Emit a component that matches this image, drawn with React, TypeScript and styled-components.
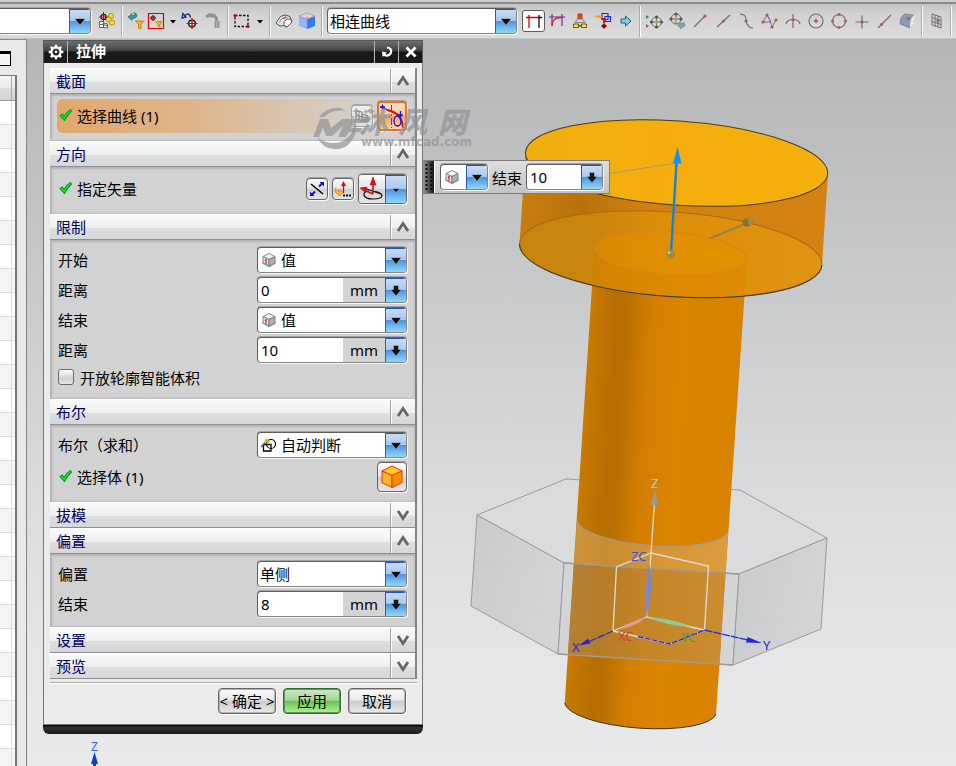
import React, { useState } from "react";
import styled, { createGlobalStyle, css } from "styled-components";

const sans = `"Noto Sans", "Noto Sans CJK SC", sans-serif`;

const GlobalStyle = createGlobalStyle`
  * { box-sizing: border-box; }
  body { margin: 0; overflow: hidden; font-family: ${sans}; font-size: 15px; color: #000; }
  button, input, select { font: inherit; color: inherit; }
`;

/* ---------- page ---------- */

const Page = styled.div`
  height: 100vh;
  display: flex;
  flex-direction: column;
`;

const Workspace = styled.div`
  flex: 1;
  min-height: 0;
  display: flex;
`;

const ToolbarEdge = styled.div`
  height: 4px;
  flex: none;
  background: #cdcdcd;
  border-bottom: 2px solid #8b8b8b;
`;

const Toolbar = styled.div`
  flex: none;
  height: 35px;
  display: flex;
  align-items: center;
  overflow: hidden;
  background: linear-gradient(#c4c4c4, #d2d2d2 30%, #dcdcdc);
  border-bottom: 1px solid #bfc3c3;
`;

const Separator = styled.span`
  flex: none;
  width: 2px;
  height: 31px;
  margin: 0 2px;
  background: linear-gradient(90deg, #adadad 50%, #fafafa 50%);
`;

const ToolButton = styled.button<{ $w?: number; $on?: boolean }>`
  flex: none;
  width: ${(p) => p.$w ?? 23}px;
  height: 22px;
  padding: 0;
  display: grid;
  place-items: center;
  border: ${(p) => (p.$on ? "1px solid #5c5c5c" : "0")};
  border-radius: 3px;
  background: ${(p) => (p.$on ? "#fff" : "transparent")};
`;

const Spacer = styled.span<{ $w: number }>`
  flex: none;
  width: ${(p) => p.$w}px;
`;

/* ---------- fields ---------- */

const Field = styled.div<{ $w?: number; $cut?: boolean }>`
  flex: none;
  width: ${(p) => p.$w ?? 150}px;
  height: 26px;
  display: flex;
  align-items: stretch;
  overflow: hidden;
  background: #fff;
  border: 1px solid #858585;
  border-top-color: #5f5f5f;
  border-left-color: #5f5f5f;
  border-radius: 4px;
  box-shadow: 1px 1px 0 #f8f8f8, 0 -1px 0 #a4a4a4;
  ${(p) => p.$cut && css`border-left: 0; border-radius: 0 4px 4px 0;`}
`;

const FieldIcon = styled.span`
  flex: none;
  width: 21px;
  display: grid;
  place-items: center;
`;

const SelectBox = styled.select`
  flex: 1;
  min-width: 0;
  appearance: none;
  padding: 0 2px;
  border: 0;
  outline: 0;
  background: transparent;
`;

const TextBox = styled.input`
  flex: 1;
  min-width: 0;
  padding: 0 3px;
  border: 0;
  outline: 0;
  background: transparent;
`;

const Unit = styled.span`
  flex: none;
  width: 42px;
  display: grid;
  place-items: center;
  background: #d3d3d3;
`;

const blueFace = css`
  flex: none;
  width: 21px;
  padding: 0;
  display: grid;
  place-items: center;
  border: 0;
  border-left: 1px solid #2a5cc0;
  border-top: 1px solid #1f55c4;
  background: linear-gradient(#c9dbf6, #a9c8f2 46%, #4a94e2 50%, #6fb7ef 75%, #8fd6fb);
`;
const BlueArrow = styled.span`${blueFace}`;
const BlueButton = styled.button`${blueFace}`;

/* ---------- side pane ---------- */

const SidePane = styled.aside`
  flex: none;
  width: 27px;
  display: flex;
  flex-direction: column;
  overflow: hidden;
  background: #e9e9e9;
  border-right: 1px solid #838383;
  border-top: 1px solid #8d8d8d;
`;

const PinFrame = styled.div`
  width: 11px;
  height: 15px;
  margin: 11px 0 9px;
  border: 1px solid #000;
  border-top-width: 3px;
  border-left: 0;
  background: #f4f4f4;
`;

const TreeGrid = styled.div`
  flex: 1;
  width: 17px;
  border-right: 2px solid #777;
  border-top: 1px solid #777;
  overflow: hidden;
`;

const TreeHead = styled.div`
  height: 25px;
  border-bottom: 1px solid #9a9a9a;
  background: linear-gradient(90deg, transparent 11px, #aaa 11px, #aaa 12px, transparent 12px),
    linear-gradient(#f4f4f4, #ececec 50%, #dadcdd 50%, #d4d6d8);
`;

const TreeRow = styled.div`
  height: 24px;
  border-bottom: 1px solid #dcdcdc;
  background: linear-gradient(90deg, transparent 11px, #dedede 11px, #dedede 12px, transparent 12px), #fff;
  &:nth-child(odd) {
    background: linear-gradient(90deg, transparent 11px, #dedede 11px, #dedede 12px, transparent 12px), #f5f5f5;
  }
`;

/* ---------- viewport ---------- */

const Viewport = styled.main`
  position: relative;
  flex: 1;
  min-width: 0;
  overflow: hidden;
  background: linear-gradient(#b3b5b7, #cbccce 38%, #dddedf 68%, #e6e7e9 90%, #e8e9ea);
`;

const SceneSvg = styled.svg`
  display: block;
  width: 100%;
  height: 100%;
`;

const Watermark = styled.svg`
  position: absolute;
  left: 283px;
  top: 53px;
  pointer-events: none;
`;

/* ---------- dialog ---------- */

const Dialog = styled.section`
  position: absolute;
  left: 16px;
  top: 1px;
  width: 380px;
`;

const TitleBar = styled.header`
  height: 23px;
  display: flex;
  align-items: stretch;
  color: #fff;
  border: 1px solid #55585a;
  border-bottom: 0;
  background: linear-gradient(#6b6e70, #505254 30%, #3a3b3c 46%, #171717 50%, #1c1c1c);
`;

const TitleText = styled.h1`
  flex: 1;
  margin: 0;
  padding-left: 8px;
  font-size: 15px;
  font-weight: 700;
  line-height: 21px;
`;

const TitleButton = styled.button<{ $side: "left" | "right" }>`
  width: 24px;
  padding: 0;
  display: grid;
  place-items: center;
  border: 0;
  border-${(p) => (p.$side === "left" ? "right" : "left")}: 1px solid #b5b5b5;
  background: transparent;
`;

const DialogBody = styled.div`
  padding: 5px 5px 10px 6px;
  background: #ebebeb;
  border: 1px solid #777;
  border-top: 0;
`;

const DialogFoot = styled.div`
  height: 9px;
  background: linear-gradient(#000, #333 30%, #1a1a1a);
  border-radius: 0 0 6px 6px;
`;

const Sections = styled.div`
  border-right: 2px solid #858585;
`;

const SectionHead = styled.h2`
  margin: 0;
  font-size: 15px;
  font-weight: 400;
`;

const SectionToggle = styled.button`
  width: 100%;
  height: 26px;
  padding: 0;
  display: flex;
  align-items: stretch;
  border: 0;
  border-top: 1px solid #fff;
  border-bottom: 1px solid #8c8e8f;
  color: #00005c;
  text-align: left;
  line-height: 24px;
  background: linear-gradient(#fafafa, #eef0f0 52%, #dcdedf 54%, #d5d7d9);
`;

const SectionName = styled.span`
  flex: 1;
  padding-left: 6px;
`;

const ChevronCell = styled.span`
  width: 25px;
  display: grid;
  place-items: center;
  border-left: 1px solid #a2a2a2;
  box-shadow: inset 1px 0 0 #fff;
`;

const SectionBody = styled.div`
  padding: 5px 8px 8px 7px;
  background: #d2d2d2;
  box-shadow: inset 2px 2px 2px #b4b4b4, inset -1px -1px 2px #bbb;
`;

const Row = styled.div<{ $h?: number; $hot?: boolean }>`
  height: ${(p) => p.$h ?? 30}px;
  display: flex;
  align-items: center;
  gap: 4px;
  ${(p) =>
    p.$hot &&
    css`
      border-radius: 6px;
      background: linear-gradient(90deg, #e2a76c, #deb68c 40%, #d9c4ae 65%, #d2d2d2 92%);
    `}
`;

const RowLabel = styled.label`
  flex: 1;
  display: flex;
  align-items: center;
  gap: 4px;
  padding: 0 0 2px 1px;
`;

const SquareButton = styled.button<{ $size: number; $hot?: boolean }>`
  flex: none;
  width: ${(p) => p.$size}px;
  height: ${(p) => p.$size}px;
  padding: 0;
  display: grid;
  place-items: center;
  border: ${(p) => (p.$hot ? "2px solid #e8701e" : "1px solid #666")};
  border-radius: 4px;
  box-shadow: 1px 1px 0 #f6f6f6, 0 -1px 0 #a0a0a0;
  background: ${(p) =>
    p.$hot
      ? "linear-gradient(#fde0c4, #fbc79a 50%, #f8a060 52%, #fdd8ae)"
      : "linear-gradient(#fafafa, #e4e4e4 48%, #cfcfcf 52%, #e6e6e6)"};
  &:disabled { border-color: #999; opacity: 0.8; }
`;

const SplitButton = styled.div`
  flex: none;
  width: 49px;
  height: 30px;
  display: flex;
  overflow: hidden;
  border: 1px solid #666;
  border-radius: 4px;
  box-shadow: 1px 1px 0 #f6f6f6, 0 -1px 0 #a0a0a0;
`;

const SplitMain = styled.button`
  flex: 1;
  padding: 0;
  border: 0;
  display: grid;
  place-items: center;
  background: linear-gradient(#fafafa, #e4e4e4 48%, #cfcfcf 52%, #e6e6e6);
`;

const CheckBox = styled.input`
  appearance: none;
  flex: none;
  width: 16px;
  height: 16px;
  margin: 0 2px 0 0;
  border: 1px solid #6b6b6b;
  border-radius: 3px;
  background: linear-gradient(#fff, #d0d0d0 60%, #e6e6e6);
  &:checked { background: #25c02b; }
`;

const Footer = styled.footer`
  margin-top: 3px;
  padding: 5px 11px 0 0;
  display: flex;
  justify-content: flex-end;
  gap: 7px;
  border-top: 1px solid #ababab;
  box-shadow: inset 0 1px 0 #fff;
`;

const ActionButton = styled.button<{ $primary?: boolean }>`
  width: 58px;
  height: 26px;
  padding: 0 0 1px;
  border: 1px solid ${(p) => (p.$primary ? "#2d6e2d" : "#666")};
  border-radius: 4px;
  line-height: 20px;
  white-space: nowrap;
  display: grid;
  place-items: center;
  box-shadow: 1px 1px 0 #fff, inset 0 0 0 1px ${(p) => (p.$primary ? "#5a9a52" : "#b4b4b4")};
  background: ${(p) =>
    p.$primary
      ? "linear-gradient(#cfe8c8, #a5d89b 46%, #6cc25a 52%, #b0f590)"
      : "linear-gradient(#fcfcfc, #e8e8e8 46%, #cccccf 52%, #eaeaea)"};
`;

/* ---------- on-canvas entry bar ---------- */

const EntryBar = styled.form`
  position: absolute;
  left: 396px;
  top: 121px;
  height: 34px;
  display: flex;
  align-items: center;
  gap: 4px;
  padding-right: 6px;
  background: linear-gradient(#dedede, #c4c4c4);
  border: 1px solid #7d7d7d;
  border-left: 0;
`;

const Grip = styled.span`
  width: 12px;
  align-self: stretch;
  margin-right: 1px;
  display: grid;
  place-items: center;
  border-right: 1px solid #fff;
  background: linear-gradient(90deg, #999, #111);
`;

/* ---------- small drawings ---------- */

const Down = ({ small }: { small?: boolean }) => (
  <svg width="12" height="10" viewBox="0 0 12 10" aria-hidden="true">
    {small ? (
      <path d="M2 3.5 6 7.5 10 3.5z" fill="#0c1424" stroke="#c6e2ff" strokeWidth=".5" />
    ) : (
      <path d="M.5 1.500h11L6 8.500z" fill="#111" stroke="#dff0ff" strokeWidth=".5" />
    )}
  </svg>
);

const FatDown = () => (
  <svg width="14" height="14" viewBox="0 0 14 14" aria-hidden="true">
    <path d="M4.500 1.500h5v4h3L7 12 1.500 5.500h3z" fill="#151515" stroke="#a8cdf5" strokeWidth=".5" />
  </svg>
);

const Caret = () => (
  <svg width="6" height="5" viewBox="0 0 6 5" aria-hidden="true"><path d="M0 1h6L3 4.500z" fill="#000" /></svg>
);

const Chevron = ({ open }: { open: boolean }) => (
  <svg width="14" height="12" viewBox="0 0 14 12" aria-hidden="true">
    <path d={open ? "M2 10 7 2.500 12 10" : "M2 2 7 9.500 12 2"} fill="none" stroke="#666" strokeWidth="2.800" />
  </svg>
);

const Tick = () => (
  <svg width="15" height="14" viewBox="0 0 15 14" aria-hidden="true">
    <path d="M2 7.500 4.500 6 6 8.500Q8.500 4 12.500 1.500L13.500 3Q9.500 7 6.500 12.500z" fill="#2bd53b" stroke="#08a81c" strokeWidth="1.200" strokeLinejoin="round" />
  </svg>
);

const ValueCube = () => (
  <svg width="16" height="16" viewBox="0 0 16 16" aria-hidden="true">
    <path d="M1 11.500 8 15.500 15 11.500 14 9H2z" fill="#8db4e8" />
    <path d="M2 4.500 8 1.500 14 4.500 8 7.500z" fill="#f6f6f6" stroke="#777" strokeWidth=".9" />
    <path d="M2 4.500 8 7.500V14L2 11z" fill="#e6e6e6" stroke="#777" strokeWidth=".9" />
    <path d="M14 4.500 8 7.500V14L14 11z" fill="#b0b0b0" stroke="#777" strokeWidth=".9" />
    <path d="M5 12V7M4 9 5 7.500" stroke="#e00000" fill="none" />
  </svg>
);

const AutoIcon = () => (
  <svg width="17" height="17" viewBox="0 0 17 17" fill="none" aria-hidden="true">
    <circle cx="11" cy="7" r="4.500" stroke="#000" strokeWidth="1.200" />
    <path d="M3.500 7.500H11V14H3.500z" stroke="#000" strokeWidth="1.300" />
    <path d="M1 10 7 4" stroke="#555" strokeWidth="1.500" />
    <path d="M7 1v6M4 4h6M5 2l4 4M9 2 5 6" stroke="#c9b400" />
  </svg>
);

const OrangeCube = () => (
  <svg width="24" height="24" viewBox="0 0 24 24" strokeLinejoin="round" aria-hidden="true">
    <path d="M2 6 12 1 22 6 12 10.500z" fill="#ffd21e" stroke="#f04a18" strokeWidth="1.200" />
    <path d="M2 6 12 10.500V22.500L2 17.500z" fill="#ffb52b" stroke="#f04a18" strokeWidth="1.200" />
    <path d="M22 6 12 10.500V22.500L22 17.500z" fill="#ff8f00" stroke="#f04a18" strokeWidth="1.200" />
  </svg>
);

const CurveIcon = () => (
  <svg width="26" height="26" viewBox="0 0 26 26" fill="none" aria-hidden="true">
    <path d="M12.500 2v23" stroke="#0a7a50" strokeDasharray="7 2 2 2" />
    <path d="M2 4 23 13" stroke="#1414d8" strokeWidth="1.300" />
    <path d="M1 4h5M3.500 1.500v5M19 12h5M21.500 8v6" stroke="#1414d8" strokeWidth="1.300" />
    <path d="M8 7Q23 10 24 25" stroke="#e21010" strokeWidth="2" />
    <ellipse cx="18.500" cy="18" rx="3.500" ry="5" stroke="#1414d8" strokeWidth="1.300" />
  </svg>
);

const SketchIcon = () => (
  <svg width="16" height="16" viewBox="0 0 16 16" fill="none" stroke="#6a6a6a" aria-hidden="true">
    <path d="M2 2.500 8 4v9L2 11zM8 6l6 2v6l-6-1M2 7l10 3M5 3v9" />
    <path d="m12 1 1 2 2 .5-2 1-1 2-1-2-2-1 2-.5z" fill="#b0a860" stroke="none" />
  </svg>
);

const ReverseIcon = () => (
  <svg width="18" height="18" viewBox="0 0 18 18" fill="none" aria-hidden="true">
    <path d="M3 4 15 14" stroke="#000" strokeWidth="1.500" />
    <path d="M4 14.500 7 11.500M11 6.500 14 3.500" stroke="#1010d0" strokeWidth="2" />
    <path d="M11.500 2H16v4.500zM2 11.500V16h4.500z" fill="#1010d0" />
  </svg>
);

const VectorIcon = () => (
  <svg width="18" height="18" viewBox="0 0 18 18" fill="none" aria-hidden="true">
    <path d="M9.500 13V4" stroke="#c01010" strokeWidth="1.300" />
    <path d="M9.500 1 12 6H7z" fill="#d01414" />
    <path d="M1.500 8Q2 11.500 5 11.500V9L9 12.500 5 16V14Q0 14 1.500 8z" fill="#ffb62a" stroke="#e07a00" strokeWidth=".7" />
    <path d="M9 15.500h8" stroke="#000" strokeWidth="2" strokeDasharray="2 1" />
  </svg>
);

const DirectionIcon = () => (
  <svg width="26" height="26" viewBox="0 0 26 26" fill="none" aria-hidden="true">
    <path d="M10 15Q4 16 5 19Q6 23 14 23Q23 23 23 19.500Q22 16 16 15.500" stroke="#111" strokeWidth="1.200" />
    <path d="M5 12 22 18" stroke="#111" strokeWidth="1.200" />
    <path d="M14 18V6M14 18 5 14" stroke="#c01414" strokeWidth="1.600" />
    <path d="M14 1 17 9h-6zM1 12l7-1-2 5z" fill="#e01414" stroke="#8c0808" strokeWidth=".5" />
  </svg>
);

const Gear = () => (
  <svg width="16" height="16" viewBox="0 0 14 14" fill="none" aria-hidden="true">
    <circle cx="7" cy="7" r="4" stroke="#fff" strokeWidth="2" />
    <circle cx="7" cy="7" r="1.200" fill="#fff" />
    <path d="M7 .6v2M7 11.400v2M.6 7h2M11.400 7h2M2.500 2.500l1.500 1.500M10 10l1.500 1.500M11.500 2.500 10 4M4 10l-1.500 1.500" stroke="#fff" strokeWidth="2.200" />
  </svg>
);

type IconName =
  | "wcs" | "undoFilter" | "boxFilter" | "target" | "hammer" | "marquee" | "eraser" | "cube"
  | "stop" | "fillet" | "stamp" | "robot" | "go" | "snapA" | "snapB" | "end" | "mid" | "ctrl"
  | "poly" | "arc" | "center" | "quad" | "cross" | "onCurve" | "face" | "grid";

const Dot = ({ x, y, c = "#b25c58" }: { x: number; y: number; c?: string }) => (
  <circle cx={x} cy={y} r="1.600" fill={c} stroke="none" />
);

const glyphs: Record<IconName, React.ReactNode> = {
  wcs: (<>
    <path d="M1.500 9.500h4v6h-4zM5.500 11l4 1v4l-4-.5M1.500 12.500h4l4 1.500" stroke="#555" strokeWidth=".9" fill="#f4f4f4" />
    <circle cx="5.500" cy="5" r="2.600" stroke="#111" /><path d="M5.500 0v9M1 5h9" stroke="#c00" strokeWidth="1" />
    <g fill="#f5d848" stroke="#b38a00" strokeWidth=".9"><circle cx="13" cy="4" r="2.600" /><circle cx="11" cy="7.500" r="2.600" /><circle cx="14" cy="10.500" r="2.600" /></g>
  </>),
  undoFilter: (<>
    <path d="M1 5 5 1.500v2h2.500Q8.500 2 6.500.8 11 1 9.500 5 8.500 6.500 5 6.500v2z" fill="#2f9aa0" stroke="#17666e" strokeWidth=".6" />
    <path d="M8.500 9h8L14 12.500V17l-2.500-1v-3.500z" fill="#ffb020" stroke="#c96f00" strokeWidth=".8" />
  </>),
  boxFilter: (<>
    <path d="M1.500 1.500h15v15h-15z" stroke="#d00" strokeWidth="1.200" />
    <circle cx="6" cy="6" r="2" stroke="#222" strokeWidth="1" /><path d="M6 3v6M3 6h6" stroke="#a00" strokeWidth="1" />
    <path d="M8.500 9.500h6.500L13 12v3l-2-1v-2z" fill="#ffb020" stroke="#c96f00" strokeWidth=".7" />
  </>),
  target: (<>
    <path d="M2 1.500 1 6 5 5zM3 4.500Q8-1 9.500 5.500" stroke="#203080" strokeWidth="1.300" fill="none" />
    <circle cx="11" cy="11.500" r="3.400" stroke="#111" strokeWidth="1.300" /><path d="M11 6v11M5.500 11.500h11" stroke="#d00" strokeWidth="1.200" />
  </>),
  hammer: (<>
    <path d="M1 4 5 1l6 1 3 4v3h-3V6L6 5 3 6z" fill="#929292" stroke="none" /><path d="M10.500 9h5v7h-5z" fill="#959595" stroke="none" /><path d="M13 9v7" stroke="#b9b9a8" />
  </>),
  marquee: (<>
    <path d="M2 3.500h13v11H2z" stroke="#111" strokeWidth="1.300" strokeDasharray="2.500 1.500" /><Dot x={2} y={3.500} c="#d00" /><Dot x={15} y={14.500} c="#d00" />
  </>),
  eraser: (<>
    <path d="M1 11 5.500 4.500Q10 1.500 15 4.500L17 10l-5 5-3.500-1.500L5 14z" fill="#e6e6ea" stroke="#555" strokeWidth="1" /><path d="M9 13.500V9.500Q12 6 15.500 7L17 10l-5 5z" stroke="#555" strokeWidth="1" fill="#fff" /><path d="M4 10.500Q6 6 11 4.500" stroke="#777" strokeWidth=".8" /><path d="M8 6.500 12 5.500" stroke="#c33" />
  </>),
  cube: (<>
    <path d="M1 4 9 1l8 3-8 3z" fill="#cfe0ff" stroke="none" /><path d="M1 4 9 7v10l-8-3z" fill="#8cb8fa" stroke="none" /><path d="M17 4 9 7v10l8-3z" fill="#2f7cf0" stroke="none" /><path d="M1 4 9 1l8 3-8 3zM9 3v11" stroke="#d8809c" strokeWidth=".9" />
  </>),
  stop: (<><path d="M4 3v13M1 5.500h13" stroke="#e00000" strokeWidth="1.300" /><path d="M14 3v13M14 5.500h3" stroke="#111" strokeWidth="1.300" /></>),
  fillet: (<><path d="M4 2v12M14 2v12M1 5h16" stroke="#64309a" strokeWidth="1.200" /><path d="M4 14Q4 5.500 13 5.500" stroke="#e02020" strokeWidth="1.300" /></>),
  stamp: (<>
    <path d="M7 2h4v6H7z" fill="#f0441c" stroke="#b02800" strokeWidth=".9" /><path d="M4 10.500 6.500 7h5l2.500 3.500z" fill="#d0d0d0" stroke="#777" strokeWidth=".8" /><path d="M2.500 12h5v3.500h-5zM10.500 12h5v3.500h-5z" fill="#ffe04a" stroke="#5c4a00" strokeWidth=".9" /><path d="M7.500 13.800h3" stroke="#333" />
  </>),
  robot: (<>
    <path d="M8 1.500h6v6H8zM11 4.500h5.500v5H11z" stroke="#1a2ce0" strokeWidth="1.200" /><path d="M1 3.500h7V6L1 5z" fill="#ff9c10" stroke="none" /><path d="M6.500 6H11v5H9V8z" fill="#e01010" stroke="none" /><circle cx="10" cy="14" r="2" fill="#600" stroke="none" /><path d="M10 11v6M7 14h6" stroke="#a00" strokeWidth="1" />
  </>),
  go: (<path d="M4 7h4.500V4l5.500 5-5.500 5v-3H4z" fill="#7fd0e0" stroke="#235f74" strokeWidth="1" />),
  snapA: (<><path d="M0 3l3 2-3 2z" fill="#3d8a58" stroke="none" /><path d="M0 12l3 2-3 2z" fill="#b55" stroke="none" /><circle cx="10.500" cy="10" r="5" strokeWidth="1" /><path d="M10.500 4v12M4.500 10h12" strokeWidth="1" /><Dot x={10.500} y={10} c="#b8a23c" /><Dot x={10.500} y={5} c="#555" /><Dot x={10.500} y={15} c="#555" /><Dot x={5.500} y={10} c="#555" /><Dot x={15.500} y={10} c="#555" /></>),
  snapB: (<><circle cx="7" cy="7" r="5" strokeWidth="1" /><path d="M7 2v10M2 7h10" strokeWidth="1" /><Dot x={7} y={7} c="#b8a23c" /><Dot x={7} y={2} c="#555" /><Dot x={2} y={7} c="#555" /><Dot x={12} y={7} c="#555" /><path d="M8.500 13 12 10.500v1.500q3 0 2-2 4 3 .5 5l-2.500.5v1.500z" fill="#7ba9b0" stroke="#5a8c96" strokeWidth=".7" /></>),
  end: (<><path d="M2 15 13 4" /><Dot x={13} y={4} /></>),
  mid: (<><path d="M2 15 15 3" /><Dot x={8.500} y={9} /></>),
  ctrl: (<><path d="M2 2.500Q8 2 8 7T10 13Q11 16 15 16" /><Dot x={8} y={9} /></>),
  poly: (<><path d="M2 10 6 3q3 4 5 12L15 8M2 10h8L6 3" stroke="#85659a" strokeWidth="1" /><Dot x={2} y={10} /><Dot x={6} y={3} /><Dot x={11} y={15} /><Dot x={15} y={8} /></>),
  arc: (<><path d="M9 2v14M2 12Q3 7.500 9 7.500t7 4.500" /><Dot x={9} y={7.500} /></>),
  center: (<><circle cx="9" cy="9" r="7" /><path d="M6.500 9h5M9 6.500v5" stroke="#b25c58" strokeWidth="1" /><Dot x={9} y={9} /></>),
  quad: (<><circle cx="9" cy="9" r="6.500" /><Dot x={9} y={2.500} /><Dot x={9} y={15.500} /><Dot x={2.500} y={9} /><Dot x={15.500} y={9} /></>),
  cross: (<><path d="M9 3.500v13M2.500 10h13" /><Dot x={9} y={10} /></>),
  onCurve: (<><path d="M2 16 15 3" /><Dot x={5.500} y={12.500} /></>),
  face: (<><path d="M1 12Q1 4 6 2l9 1Q10 7 11 16 6 14 1 12z" fill="#8d9bb2" stroke="#76859a" strokeWidth=".8" /><path d="M15 3Q10 7 11 16l4-4q-1-5 1-8z" fill="#e4e4e4" stroke="none" /><Dot x={9.500} y={6.500} /></>),
  grid: (<><path d="M4 2 13 5v11L4 13zM4 5.500l9 3M4 9.500l9 3M7 3v11M10 4v11" strokeWidth="1" /><Dot x={10} y={9} /></>),
};

const Icon = ({ name }: { name: IconName }) => (
  <svg width="18" height="18" viewBox="0 0 18 18" fill="none" stroke="#707070" strokeWidth="1.200" aria-hidden="true">
    {glyphs[name]}
  </svg>
);

type Tool = { icon: IconName; label: string; w?: number; on?: boolean };
const Tools = ({ items }: { items: Tool[] }) => (
  <>
    {items.map((t) => (
      <ToolButton key={t.label} type="button" aria-label={t.label} $w={t.w} $on={t.on}>
        <Icon name={t.icon} />
      </ToolButton>
    ))}
  </>
);

const snapTools: Tool[] = [
  { icon: "snapA", label: "启用捕捉点" }, { icon: "snapB", label: "清除捕捉点" },
  { icon: "end", label: "端点" }, { icon: "mid", label: "中点" }, { icon: "ctrl", label: "控制点" },
  { icon: "poly", label: "极点" }, { icon: "arc", label: "交点" }, { icon: "center", label: "圆弧中心" },
  { icon: "quad", label: "象限点" }, { icon: "cross", label: "现有点" }, { icon: "onCurve", label: "曲线上的点" },
  { icon: "face", label: "面上的点" },
];

/* ---------- scene ---------- */

const Scene = () => (
  <SceneSvg viewBox="27 39 929 727" preserveAspectRatio="xMinYMin slice" role="img" aria-label="螺栓模型">
    <defs>
      <linearGradient id="shaft" gradientUnits="userSpaceOnUse" x1="565" y1="703" x2="716" y2="713">
        <stop offset="0" stopColor="#c87a00" /><stop offset=".18" stopColor="#b66e00" />
        <stop offset=".24" stopColor="#b97000" /><stop offset=".4" stopColor="#d27e00" />
        <stop offset=".6" stopColor="#db8400" /><stop offset="1" stopColor="#d88200" />
      </linearGradient>
      <linearGradient id="head" gradientUnits="userSpaceOnUse" x1="519" y1="230" x2="825" y2="250">
        <stop offset="0" stopColor="#c97d10" /><stop offset=".2" stopColor="#b8710b" />
        <stop offset=".4" stopColor="#d2800f" /><stop offset="1" stopColor="#d38312" />
      </linearGradient>
      <linearGradient id="base" gradientUnits="userSpaceOnUse" x1="519" y1="250" x2="825" y2="260">
        <stop offset="0" stopColor="#c6850f" /><stop offset=".22" stopColor="#c8840c" />
        <stop offset=".45" stopColor="#dc8e08" /><stop offset="1" stopColor="#e09412" />
      </linearGradient>
      <linearGradient id="inner" gradientUnits="userSpaceOnUse" x1="594" y1="250" x2="747" y2="260">
        <stop offset="0" stopColor="#ce8300" /><stop offset=".5" stopColor="#dd8900" /><stop offset="1" stopColor="#dd8b05" />
      </linearGradient>
      <linearGradient id="disc" x1="0" x2="1"><stop offset="0" stopColor="#d68900" /><stop offset=".5" stopColor="#e19000" /><stop offset="1" stopColor="#e19000" /></linearGradient>
      <linearGradient id="top" x1="0" x2="1"><stop offset="0" stopColor="#f2ad10" /><stop offset="1" stopColor="#f5b00c" /></linearGradient>
      <linearGradient id="facet" x1="0" x2="1" y2=".4"><stop offset="0" stopColor="#c9cacb" /><stop offset="1" stopColor="#d3d4d6" /></linearGradient>
      <linearGradient id="veil" x1="0" x2="1"><stop offset="0" stopColor="#b4813a" /><stop offset=".2" stopColor="#b57b27" /><stop offset=".5" stopColor="#c58526" /><stop offset="1" stopColor="#cb8d30" /></linearGradient>
      <linearGradient id="veilTop" x1="0" x2="1"><stop offset="0" stopColor="#cd9440" /><stop offset=".2" stopColor="#c88c30" /><stop offset=".5" stopColor="#d69433" /><stop offset="1" stopColor="#dc9d3e" /></linearGradient>
    </defs>

    <g stroke="#9a9b9d" strokeLinejoin="round">
      <path d="M477 515 566 479 740 490 827 538 739 574 564 563z" fill="#dadbdc" />
      <path d="M477 515 564 563 558 654 471 606z" fill="url(#facet)" />
      <path d="M564 563 739 574 733 665 558 654z" fill="#d3d4d6" />
      <path d="M827 538 739 574 733 665 821 629z" fill="url(#facet)" />
    </g>

    <path d="M594.500 248 564.700 703A76 21 4.100 0 0 716 714L747 259z" fill="url(#shaft)" />
    <path d="M564.700 703A76 21 4.100 0 0 716 714" fill="none" stroke="#3a3428" />
    <path d="M577 521A76 21 4.100 0 0 728 532L725.500 573 574 563.500z" fill="url(#veilTop)" />
    <path d="M574 563.500 725.500 573 719.500 664 568 654.500z" fill="url(#veil)" />
    <path d="M577 521A76 21 4.100 0 0 728 532M564 563 739 574M558 654 733 665" fill="none" stroke="#a29a90" strokeWidth="1.300" />

    <path d="M525.500 153 519.500 244A151.500 42 4.100 0 0 822 265L828 173z" fill="url(#head)" />
    <ellipse cx="670.700" cy="254" rx="151.500" ry="42" transform="rotate(4.100 670.700 254)" fill="url(#base)" stroke="#a86a10" />
    <path d="M594.500 248 591.500 286Q660 300 744.500 296L747 259z" fill="url(#inner)" />
    <ellipse cx="670.700" cy="253.500" rx="76" ry="21" transform="rotate(4.100 670.700 253.500)" fill="url(#disc)" stroke="#dd8418" strokeWidth="1.500" />
    <path d="M519.500 244A151.500 42 4.100 0 0 822 265" fill="none" stroke="#33383c" />
    <ellipse cx="676.600" cy="163" rx="151.500" ry="42" transform="rotate(4.100 676.600 163)" fill="url(#top)" stroke="#4a3c18" />

    <path d="M609 173.500 674 163.500" stroke="#ab9b66" />
    <path d="M672 250 677.500 160" stroke="#7d7c68" strokeWidth="1" />
    <path d="M671 250 676.500 160" stroke="#0a84e8" strokeWidth="2" />
    <path d="M677.500 147 681.500 163.500 673 163.500z" fill="#0a92ff" />
    <circle cx="670.500" cy="254" r="4.500" fill="#9b8a45" /><circle cx="669" cy="252.500" r="1.500" fill="#d2c58a" />
    <path d="M709.500 238.500 746 223.500" stroke="#9a8340" strokeWidth="2" />
    <circle cx="747" cy="222.500" r="4.300" fill="#85713a" /><path d="M748 218.500 756 218.500 749 226z" fill="#a08c4c" />

    <g fill="none">
      <path d="M613 631 616.500 567 651 553 708.500 566 704.500 630M646.500 617 651 553 654.500 503M646.500 617 613 631M646.500 617 704.500 630" stroke="#dfddd8" strokeWidth="1.300" />
      <path d="M613 631 670 644 704.500 630" stroke="#ddd" strokeWidth="1.300" />
      <path d="M638 636.500 670 644 704.500 630" stroke="#2828d8" strokeDasharray="6 1" strokeWidth="1.300" />
      <path d="M613 631 588 642M704.500 630 748 640" stroke="#2828d8" strokeDasharray="8 1" strokeWidth="1.300" />
    </g>
    <path d="M655 489 658 505 651 505z" fill="#999" />
    <path d="M579 645.500 588 638.500 590.500 643.500zM762 643 747.500 637 746 642.500z" fill="#2424e0" />
    <path d="M649.500 564Q654 584 646.500 617 644 587 649.500 564z" fill="#7888cc" />
    <path d="M646.500 617Q636 619 620 629 636 627 646.500 617z" fill="#e29a90" />
    <path d="M646.500 617Q672 618 693 627 667 626 646.500 617z" fill="#94c89a" />
    <g fontFamily="Noto Sans" fontSize="13">
      <text x="651" y="488" fill="#f6f6f6" stroke="#888" strokeWidth=".4">Z</text>
      <text x="631" y="561" fill="#3b55f5">ZC</text>
      <text x="618" y="641" fill="#d04434">XC</text>
      <text x="681" y="642" fill="#3da04a">YC</text>
      <text x="572" y="652" fill="#2424e8">X</text>
      <text x="763" y="650" fill="#2424e8">Y</text>
      <text x="91" y="751" fill="#3560ff" fontSize="12">Z</text>
    </g>
    <path d="M94.500 752 98 764H91zM93 763h3v4h-3z" fill="#0a3fd0" />
  </SceneSvg>
);

const Mark = () => (
  <Watermark width="170" height="66" viewBox="310 92 170 66" aria-hidden="true">
    <g fill="#929496" fillOpacity=".72">
      <path d="M319 117Q326 107 340 108L346 111Q333 109 324 117zM317 137Q324 151 338 149 352 147 356 131 358 119 349 113 358 122 351 134 343 144 332 143 322 142 317 137z" />
      <path d="M313 137 320 119H328L331 128 342 119H368L366 123H354L351 128H362L360 132H349L346 137H338L343 126 332 136H326L323 127 319 137z" />
      <path d="M353 110.500h2.500V108h1.500v2.500h2.500v1.500h-2.500v2.500H355.500V112H353z" />
      <text y="133" x="359 398 438" fontSize="29" fontWeight="900" fontStyle="italic" fontFamily="Noto Sans CJK SC">沐风网</text>
      <text x="361" y="146" fontSize="12" fontWeight="700" fontFamily="DejaVu Sans">www.mfcad.com</text>
    </g>
  </Watermark>
);

/* ---------- dialog parts ---------- */

const Section = ({ title, closed, children }: { title: string; closed?: boolean; children?: React.ReactNode }) => {
  const [open, setOpen] = useState(!closed);
  return (
    <div>
      <SectionHead>
        <SectionToggle type="button" aria-expanded={open} onClick={() => setOpen(!open)}>
          <SectionName>{title}</SectionName>
          <ChevronCell><Chevron open={open} /></ChevronCell>
        </SectionToggle>
      </SectionHead>
      {open && children && <SectionBody>{children}</SectionBody>}
    </div>
  );
};

const Choice = ({ id, label, value, icon }: { id: string; label: string; value: string; icon?: React.ReactNode }) => (
  <Row>
    <RowLabel htmlFor={id}>{label}</RowLabel>
    <Field>
      {icon && <FieldIcon>{icon}</FieldIcon>}
      <SelectBox id={id}><option>{value}</option></SelectBox>
      <BlueArrow><Down /></BlueArrow>
    </Field>
  </Row>
);

const Measure = ({ id, label, value }: { id: string; label: string; value: string }) => (
  <Row>
    <RowLabel htmlFor={id}>{label}</RowLabel>
    <Field>
      <TextBox id={id} defaultValue={value} />
      <Unit>mm</Unit>
      <BlueButton type="button" aria-label={label + "选项"}><FatDown /></BlueButton>
    </Field>
  </Row>
);

export default function App() {
  return (
    <Page>
      <GlobalStyle />
      <ToolbarEdge />
      <Toolbar role="toolbar" aria-label="选择条">
        <Field $w={91} $cut>
          <SelectBox aria-label="类型过滤器"><option></option></SelectBox>
          <BlueArrow><Down /></BlueArrow>
        </Field>
        <Spacer $w={4} />
        <Tools items={[{ icon: "wcs", label: "常规选择过滤器", w: 24 }]} />
        <Separator />
        <Tools items={[{ icon: "undoFilter", label: "重置过滤器", w: 21 }, { icon: "boxFilter", label: "允许选择", w: 20 }]} />
        <ToolButton type="button" aria-label="更多过滤器" $w={13}><Caret /></ToolButton>
        <Tools items={[{ icon: "target", label: "细节过滤", w: 22 }, { icon: "hammer", label: "恢复", w: 24 }]} />
        <Separator />
        <Tools items={[{ icon: "marquee", label: "矩形选择", w: 22 }]} />
        <ToolButton type="button" aria-label="更多选择方式" $w={14}><Caret /></ToolButton>
        <Separator />
        <Tools items={[{ icon: "eraser", label: "面", w: 22 }, { icon: "cube", label: "体", w: 24 }]} />
        <Separator />
        <Spacer $w={2} />
        <Field $w={190}>
          <SelectBox aria-label="曲线规则"><option>相连曲线</option></SelectBox>
          <BlueArrow><Down /></BlueArrow>
        </Field>
        <Spacer $w={5} />
        <Tools
          items={[
            { icon: "stop", label: "在相交处停止", w: 23, on: true }, { icon: "fillet", label: "跟随圆角", w: 23 },
            { icon: "stamp", label: "特征内成链" }, { icon: "robot", label: "路径选择" }, { icon: "go", label: "继续" },
          ]}
        />
        <Separator />
        <Tools items={snapTools} />
        <Separator />
        <Tools items={[{ icon: "grid", label: "有界栅格" }]} />
        <Separator />
      </Toolbar>

      <Workspace>
        <SidePane>
          <PinFrame />
          <TreeGrid>
            <TreeHead />
            {Array.from({ length: 40 }, (_, i) => <TreeRow key={i} />)}
          </TreeGrid>
        </SidePane>

        <Viewport>
          <Scene />

          <Dialog role="dialog" aria-labelledby="dialog-title">
            <TitleBar>
              <TitleButton type="button" aria-label="设置" $side="left"><Gear /></TitleButton>
              <TitleText id="dialog-title">拉伸</TitleText>
              <TitleButton type="button" aria-label="重置" $side="right">
                <svg width="14" height="14" viewBox="0 0 14 14" fill="none"><path d="M7 2.500Q12 3 11 7.500 9.500 11 5.500 10.500L3.500 9.500" stroke="#fff" strokeWidth="2.200" /><path d="M2 6.500 7 7.500 2.500 12z" fill="#fff" /></svg>
              </TitleButton>
              <TitleButton type="button" aria-label="关闭" $side="right">
                <svg width="14" height="14" viewBox="0 0 14 14"><path d="M2.500 2.500 11.500 11.500M11.500 2.500 2.500 11.500" stroke="#fff" strokeWidth="2.800" /></svg>
              </TitleButton>
            </TitleBar>
            <DialogBody>
              <Sections>
                <Section title="截面">
                  <Row $h={34} $hot>
                    <RowLabel as="span"><Tick />选择曲线 (1)</RowLabel>
                    <SquareButton type="button" aria-label="绘制截面" $size={22} disabled><SketchIcon /></SquareButton>
                    <SquareButton type="button" aria-label="曲线" $size={30} $hot><CurveIcon /></SquareButton>
                  </Row>
                </Section>
                <Section title="方向">
                  <Row $h={34}>
                    <RowLabel as="span"><Tick />指定矢量</RowLabel>
                    <SquareButton type="button" aria-label="反向" $size={22}><ReverseIcon /></SquareButton>
                    <SquareButton type="button" aria-label="矢量对话框" $size={22}><VectorIcon /></SquareButton>
                    <SplitButton>
                      <SplitMain type="button" aria-label="自动判断的矢量"><DirectionIcon /></SplitMain>
                      <BlueButton type="button" aria-label="矢量类型"><Down small /></BlueButton>
                    </SplitButton>
                  </Row>
                </Section>
                <Section title="限制">
                  <Choice id="start" label="开始" value="值" icon={<ValueCube />} />
                  <Measure id="start-distance" label="距离" value="0" />
                  <Choice id="end" label="结束" value="值" icon={<ValueCube />} />
                  <Measure id="end-distance" label="距离" value="10" />
                  <Row $h={26}>
                    <RowLabel><CheckBox type="checkbox" />开放轮廓智能体积</RowLabel>
                  </Row>
                </Section>
                <Section title="布尔">
                  <Choice id="boolean" label="布尔（求和）" value="自动判断" icon={<AutoIcon />} />
                  <Row $h={34}>
                    <RowLabel as="span"><Tick />选择体 (1)</RowLabel>
                    <SquareButton type="button" aria-label="体" $size={30}><OrangeCube /></SquareButton>
                  </Row>
                </Section>
                <Section title="拔模" closed />
                <Section title="偏置">
                  <Choice id="offset" label="偏置" value="单侧" />
                  <Measure id="offset-end" label="结束" value="8" />
                </Section>
                <Section title="设置" closed />
                <Section title="预览" closed />
              </Sections>
              <Footer>
                <ActionButton type="button">&lt; 确定 &gt;</ActionButton>
                <ActionButton type="button" $primary>应用</ActionButton>
                <ActionButton type="button">取消</ActionButton>
              </Footer>
            </DialogBody>
            <DialogFoot />
          </Dialog>

          <EntryBar onSubmit={(e) => e.preventDefault()}>
            <Grip>
              <svg width="8" height="26" viewBox="0 0 8 26"><path d="M1.500 0v26M6 0v26" stroke="#111" strokeWidth="2" strokeDasharray="2 2" /></svg>
            </Grip>
            <Field $w={48}>
              <FieldIcon><ValueCube /></FieldIcon>
              <SelectBox aria-label="结束类型"><option></option></SelectBox>
              <BlueArrow><Down /></BlueArrow>
            </Field>
            <label htmlFor="canvas-end">结束</label>
            <Field $w={77}>
              <TextBox id="canvas-end" defaultValue="10" />
              <BlueButton type="button" aria-label="结束选项"><FatDown /></BlueButton>
            </Field>
          </EntryBar>

          <Mark />
        </Viewport>
      </Workspace>
    </Page>
  );
}
